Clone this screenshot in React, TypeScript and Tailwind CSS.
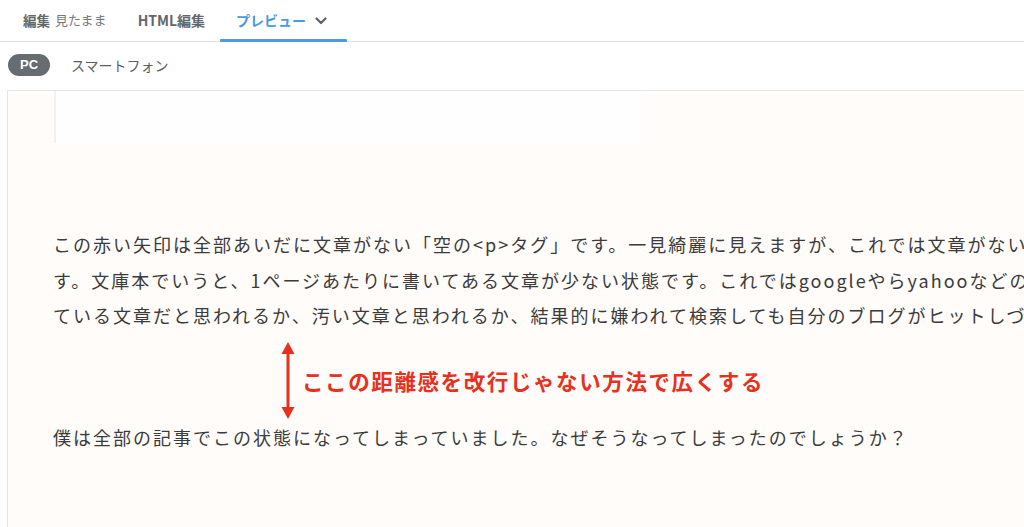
import React from "react";

const jp = { fontFamily: '"Noto Sans CJK JP", "Noto Sans", sans-serif' };

function Chevron() {
  return (
    <svg width="12" height="8" viewBox="0 0 12 8" className="ml-[9px] mt-[1px]">
      <path d="M1.5 1.5 L6 6 L10.5 1.5" fill="none" stroke="#5f6368" strokeWidth="2.2" strokeLinecap="round" strokeLinejoin="round" />
    </svg>
  );
}

function DoubleArrow() {
  return (
    <svg width="16" height="77" viewBox="0 0 16 77">
      <rect x="6.5" y="10" width="3" height="57" fill="#e8301e" />
      <path d="M8 0 L14.5 12 L1.5 12 Z" fill="#e8301e" />
      <path d="M8 77 L14.5 65 L1.5 65 Z" fill="#e8301e" />
    </svg>
  );
}

export default function App() {
  const lines = [
    "この赤い矢印は全部あいだに文章がない「空の<p>タグ」です。一見綺麗に見えますが、これでは文章がない",
    "す。文庫本でいうと、1ページあたりに書いてある文章が少ない状態です。これではgoogleやらyahooなどの検索",
    "ている文章だと思われるか、汚い文章と思われるか、結果的に嫌われて検索しても自分のブログがヒットしづらい",
  ];
  return (
    <div className="w-[1024px] h-[527px] overflow-hidden bg-white flex flex-col" style={jp}>
      {/* editor mode tabs */}
      <div className="h-[42px] shrink-0 border-b border-[#dde1e6] flex items-stretch pl-[23px]">
        <div className="flex items-center pb-[1px]">
          <span className="text-[13.5px] font-bold text-[#62676c]">編集</span>
          <span className="ml-[5px] text-[13px] text-[#74797e]">見たまま</span>
        </div>
        <div className="flex items-center pb-[1px] ml-[31px] text-[14px] font-bold text-[#62676c]">HTML編集</div>
        <div className="relative flex items-center pb-[1px] ml-[15px] pl-[16px] pr-[20px]">
          <span className="text-[14px] font-bold text-[#4a9be0]">プレビュー</span>
          <Chevron />
          <div className="absolute left-0 right-0 bottom-[-1px] h-[3px] bg-[#4a9be0] rounded-[1px]" />
        </div>
      </div>

      {/* device switch */}
      <div className="h-[48px] shrink-0 flex items-center pl-[8px] pb-[2px]">
        <div className="h-[22px] w-[42px] rounded-full bg-[#676c71] text-white text-[13px] font-bold flex items-center justify-center" style={{ fontFamily: '"Liberation Sans", "Noto Sans", sans-serif' }}>
          PC
        </div>
        <span className="ml-[21px] text-[14px] text-[#5b6065]">スマートフォン</span>
      </div>

      {/* preview pane */}
      <div className="flex-1 ml-[7px] border-l border-t border-[#e2e5e9] bg-[#fffcf9] overflow-hidden">
        <div className="ml-[46px] w-[587px] h-[52px] bg-[#fefefe] border-l-2 border-[#f1f1f1]" />
        <div className="mt-[84px] pl-[45px] text-[18px] leading-[35.5px] text-[#3b3b3b] tracking-[2px] whitespace-nowrap">
          {lines.map((l) => (
            <p key={l}>{l}</p>
          ))}
        </div>
        <div className="flex items-center pl-[272px] mt-[8px] h-[77px]">
          <DoubleArrow />
          <span className="ml-[6px] text-[21.5px] font-bold text-[#e8301e] tracking-[1.6px] leading-none pt-[1px]">
            ここの距離感を改行じゃない方法で広くする
          </span>
        </div>
        <p className="pl-[45px] mt-[1px] text-[18px] leading-[35.5px] text-[#3b3b3b] tracking-[2px] whitespace-nowrap">
          僕は全部の記事でこの状態になってしまっていました。なぜそうなってしまったのでしょうか？
        </p>
      </div>
    </div>
  );
}
